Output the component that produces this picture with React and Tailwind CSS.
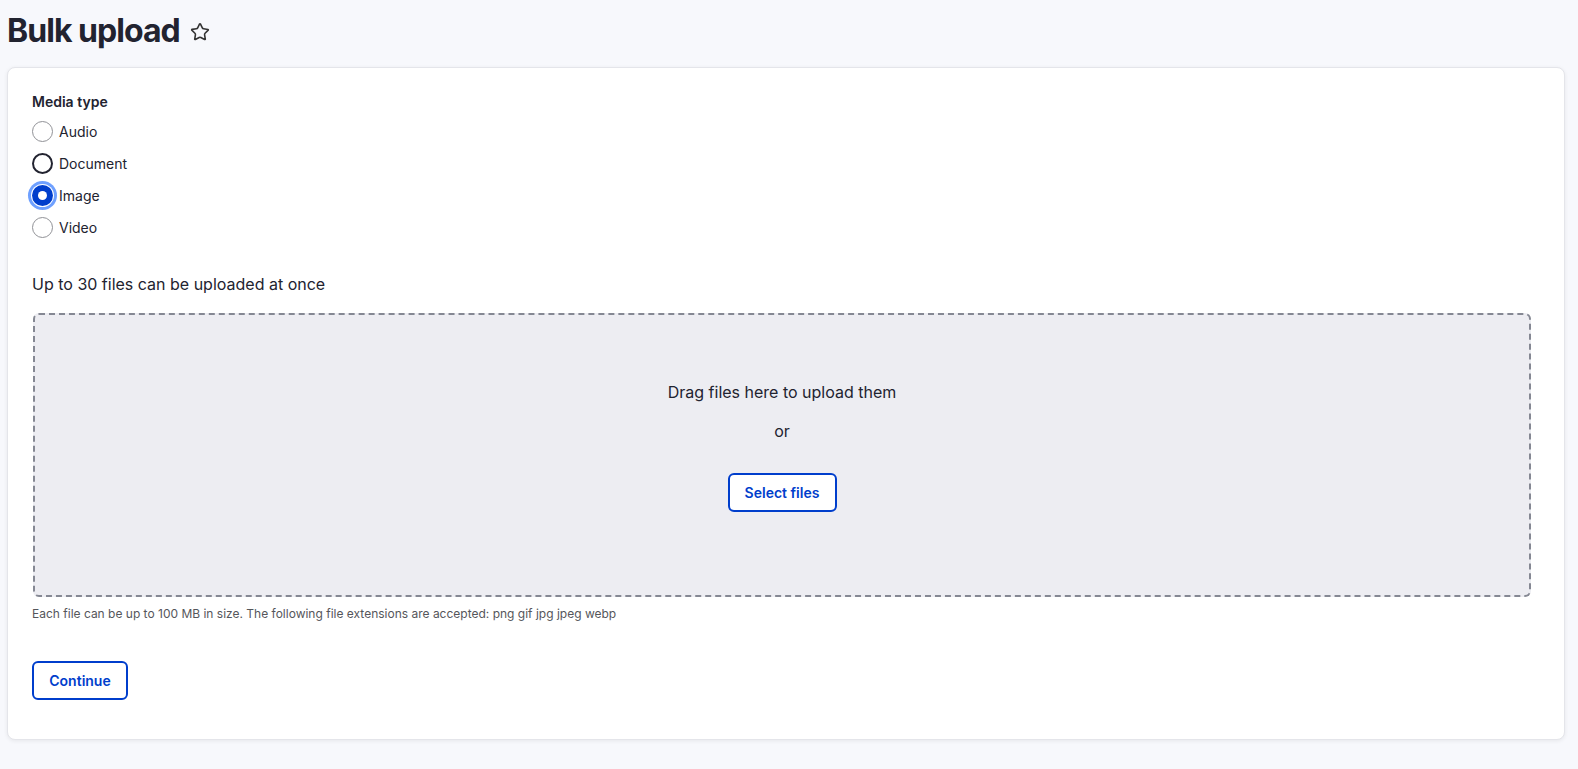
import { Star } from "lucide-react";

const options = [
  { label: "Audio", state: "idle" },
  { label: "Document", state: "hover" },
  { label: "Image", state: "checked" },
  { label: "Video", state: "idle" },
];

function Radio({ state }) {
  if (state === "checked") {
    return (
      <span className="flex h-[21px] w-[21px] items-center justify-center rounded-full bg-[#003ecc] shadow-[0_0_0_1px_#ffffff,0_0_0_4px_#6ea0ff]">
        <span className="h-[9px] w-[9px] rounded-full bg-white" />
      </span>
    );
  }
  return (
    <span
      className={
        state === "hover"
          ? "h-[21px] w-[21px] rounded-full border-2 border-[#222330] bg-white"
          : "h-[21px] w-[21px] rounded-full border border-[#919297] bg-white"
      }
    />
  );
}

export default function App() {
  return (
    <div className="min-h-screen bg-[#f7f8fc] pl-[7px] pr-[13px] pt-[8px] font-['Inter',sans-serif] text-[#222330]">
      <div className="flex h-[46px] items-center gap-[10px]">
        <h1 className="text-[32px] font-bold leading-[40px] tracking-[-0.03em]">Bulk upload</h1>
        <Star size={20} strokeWidth={1.9} className="mt-[1px] text-[#333]" />
      </div>

      <div className="mt-[13px] rounded-[8px] border border-[#e4e5ea] bg-white pb-[39px] pl-[24px] pr-[33px] pt-[24px] shadow-[0_1px_4px_rgba(0,0,0,0.07)]">
        <div className="text-[14px] font-semibold leading-[20px]">Media type</div>
        <div className="mt-[9px] flex flex-col gap-[11px]">
          {options.map((o) => (
            <label key={o.label} className="flex h-[21px] items-center gap-[6px] text-[14px]">
              <Radio state={o.state} />
              <span>{o.label}</span>
            </label>
          ))}
        </div>

        <p className="mt-[34px] text-[16px] leading-[24px]">Up to 30 files can be uploaded at once</p>

        <div className="mt-[17px] ml-[1px] flex h-[284px] flex-col items-center rounded-[6px] border-2 border-dashed border-[#858893] bg-[#ededf2] pt-[65px]">
          <p className="text-[16px] leading-[24px]">Drag files here to upload them</p>
          <p className="mt-[15px] text-[16px] leading-[24px]">or</p>
          <button className="mt-[30px] h-[39px] w-[109px] rounded-[6px] border-2 border-[#003ecc] bg-white text-[14px] font-semibold text-[#003ecc]">
            Select files
          </button>
        </div>

        <p className="mt-[9px] text-[12px] leading-[16px] text-[#55565b]">
          Each file can be up to 100 MB in size. The following file extensions are accepted: png gif jpg jpeg webp
        </p>

        <button className="mt-[39px] h-[39px] w-[96px] rounded-[6px] border-2 border-[#003ecc] bg-white text-[14px] font-semibold text-[#003ecc]">
          Continue
        </button>
      </div>
    </div>
  );
}
